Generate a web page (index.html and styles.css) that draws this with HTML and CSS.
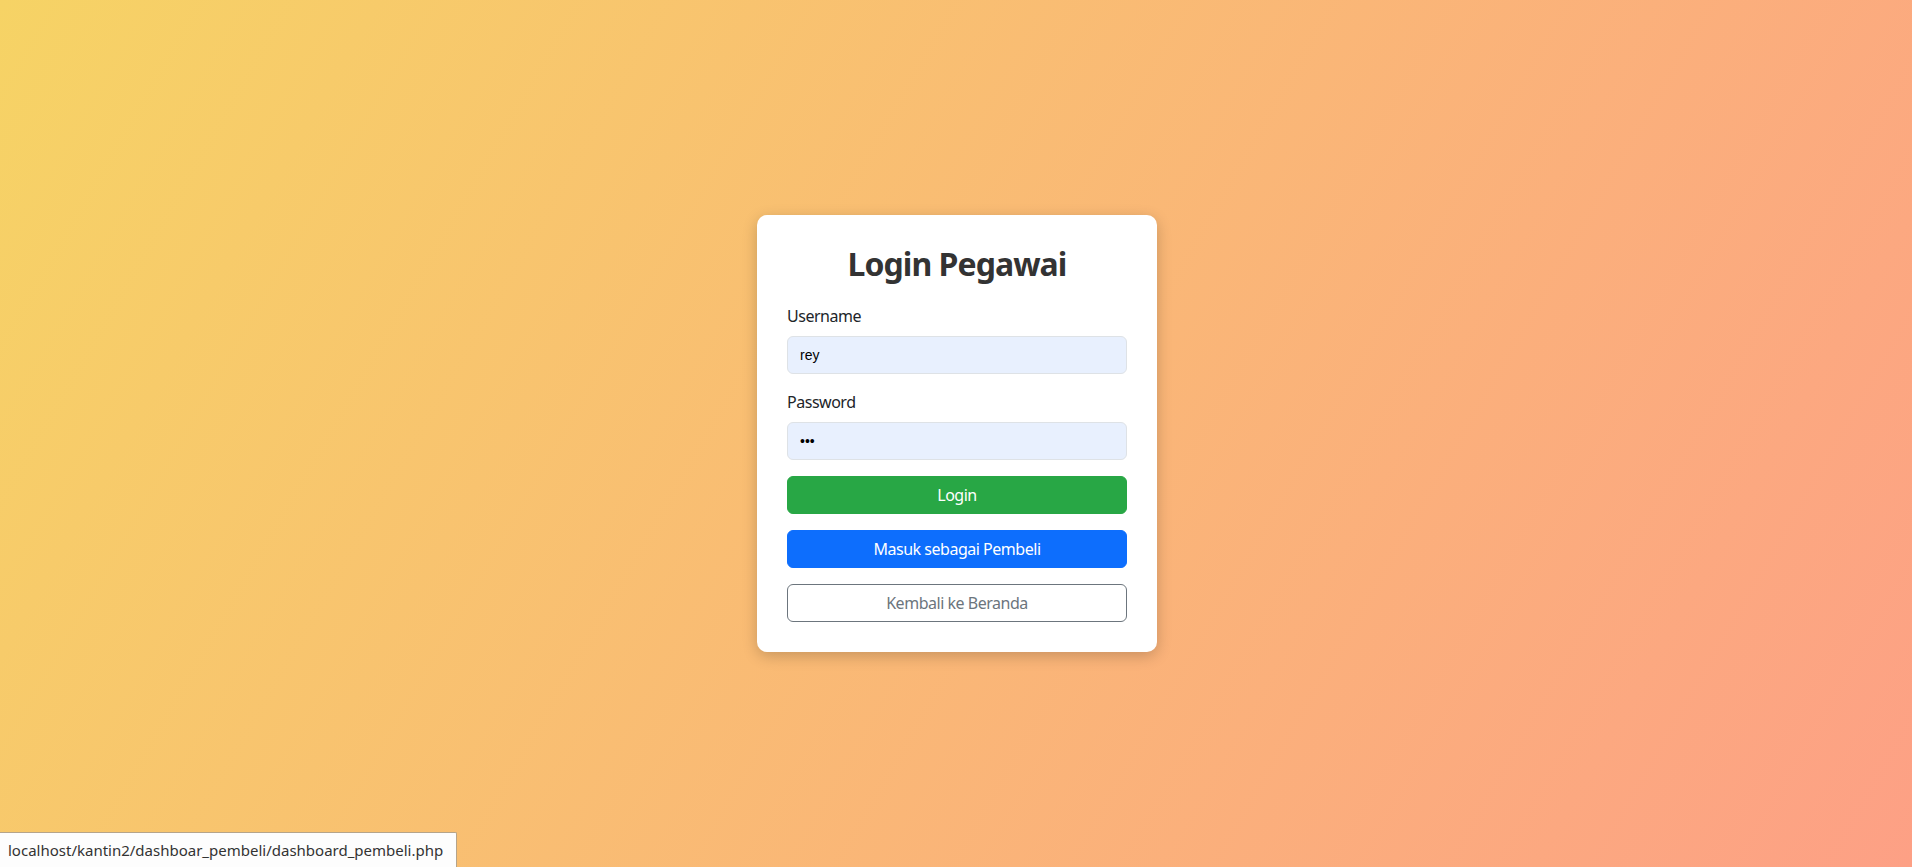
FILE: index.html
```html
<!DOCTYPE html>
<html lang="id">
<head>
<meta charset="utf-8">
<title>Login Pegawai</title>
<link rel="stylesheet" href="styles.css">
</head>
<body>
<main class="page">
  <div class="card">
    <h2 class="title">Login Pegawai</h2>
    <form class="form">
      <div class="field">
        <label class="label" for="u">Username</label>
        <input class="input" id="u" type="text" value="rey">
      </div>
      <div class="field">
        <label class="label" for="p">Password</label>
        <input class="input" id="p" type="password" value="rey">
      </div>
      <button type="button" class="btn btn-green">Login</button>
      <a class="btn btn-blue" href="#">Masuk sebagai Pembeli</a>
      <a class="btn btn-outline" href="#">Kembali ke Beranda</a>
    </form>
  </div>
</main>
<div class="status">localhost/kantin2/dashboar_pembeli/dashboard_pembeli.php</div>
</body>
</html>
```

FILE: styles.css
```css
* { box-sizing: border-box; }
html, body { margin: 0; height: 100%; }
body {
  font-family: "Noto Sans", "Open Sans", sans-serif;
  background: linear-gradient(120deg, #f6d365 0%, #fda085 100%);
  color: #212529;
  overflow: hidden;
}
.page {
  height: 100vh;
  padding-left: 2px;
  display: flex;
  align-items: center;
  justify-content: center;
}
.card {
  width: 400px;
  background: #fff;
  border-radius: 10px;
  padding: 30px;
  box-shadow: 0 4px 15px rgba(0,0,0,0.2);
}
.title {
  margin: 0 0 20px;
  text-align: center;
  font-size: 32px;
  line-height: 1.2;
  font-weight: 700;
  letter-spacing: -0.03em;
  color: #333;
}
.form { display: flex; flex-direction: column; gap: 16px; }
.field { display: flex; flex-direction: column; }
.label {
  font-size: 16px;
  line-height: 24px;
  margin-bottom: 8px;
  letter-spacing: -0.03em;
  color: #212529;
}
.input {
  height: 38px;
  border: 1px solid #dee2e6;
  border-radius: 6px;
  background: #e8f0fe;
  padding: 0 12px;
  font-family: "Liberation Sans", Arial, sans-serif;
  font-size: 14px;
  color: #000;
  outline: none;
}
.btn {
  display: flex;
  align-items: center;
  justify-content: center;
  height: 38px;
  border-radius: 6px;
  border: 1px solid transparent;
  font-family: inherit;
  font-size: 16px;
  letter-spacing: -0.03em;
  text-decoration: none;
  color: #fff;
  cursor: pointer;
}
.btn-green { background: #28a745; border-color: #28a745; }
.btn-blue { background: #0d6efd; border-color: #0d6efd; }
.btn-outline { background: #fff; border-color: #6c757d; color: #6c757d; }
.status {
  position: fixed;
  left: 0;
  bottom: 0;
  height: 35px;
  padding: 0 13px 0 8px;
  display: flex;
  align-items: center;
  background: #fdfdfd;
  border-top: 1px solid #b5a48a;
  border-right: 1px solid #b5a48a;
  font-family: "Noto Sans", sans-serif;
  font-size: 15px;
  color: #333;
  border-top-right-radius: 2px;
}
```
